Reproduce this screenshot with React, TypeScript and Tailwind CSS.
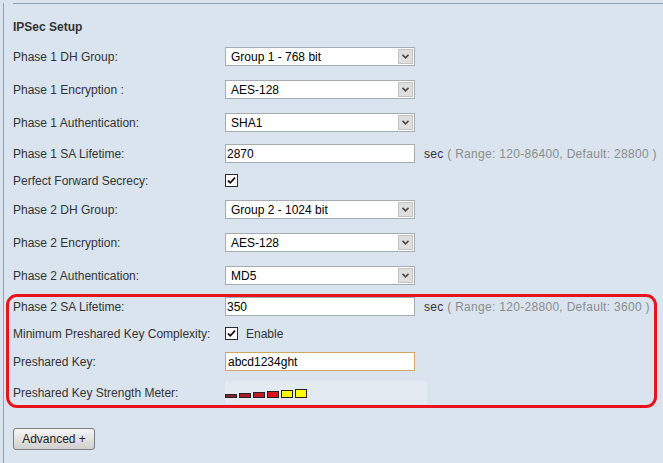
import type { ReactNode } from 'react';

const FONT = "font-['Liberation_Sans',Arial,sans-serif]";

function Select({ value }: { value: string }) {
  return (
    <div className="flex h-[19px] w-[190px] border border-[#a5acb2] bg-white">
      <div className="flex flex-1 items-center pl-[5px] text-[12px] text-black">{value}</div>
      <div className="m-[1px] flex w-[15px] items-center justify-center border border-[#c3c3c3] bg-[#dedede]">
        <svg width="7" height="5" viewBox="0 0 7 5">
          <path d="M0.5 0.8 L3.5 3.8 L6.5 0.8" fill="none" stroke="#4a4a4a" strokeWidth="1.6" />
        </svg>
      </div>
    </div>
  );
}

function TextBox({ value, focus = false }: { value: string; focus?: boolean }) {
  return (
    <div
      className={
        focus
          ? 'flex h-[19px] w-[190px] items-center border border-[#d3a762] bg-white pl-[2px] text-[12px] text-black'
          : 'flex h-[19px] w-[190px] items-center border border-[#a5acb2] bg-white pl-[1px] text-[12px] text-black'
      }
    >
      {value}
    </div>
  );
}

function Check() {
  return (
    <div className="flex h-[13px] w-[13px] items-center justify-center border border-[#2b2b2b] bg-white">
      <svg width="9" height="9" viewBox="0 0 9 9">
        <path d="M1 4.5 L3.3 6.8 L8 1.6" fill="none" stroke="#111" strokeWidth="1.8" />
      </svg>
    </div>
  );
}

function Row({ label, children, className }: { label: string; children: ReactNode; className: string }) {
  return (
    <div className={`flex items-center ${className}`}>
      <div className="w-[212px] shrink-0 text-[12px] text-[#333]">{label}</div>
      {children}
    </div>
  );
}

function Range({ text }: { text: string }) {
  return (
    <span className="ml-[9px] text-[12px] tracking-[0.3px] text-[#333]">
      sec <span className="text-[#8c8c8c]">{text}</span>
    </span>
  );
}

const bars = [
  { h: 'h-[4px]', c: 'bg-[#8d2030]' },
  { h: 'h-[5px]', c: 'bg-[#ad1c2c]' },
  { h: 'h-[6px]', c: 'bg-[#c31a29]' },
  { h: 'h-[7px]', c: 'bg-[#de101b]' },
  { h: 'h-[8px]', c: 'bg-[#ffff00]' },
  { h: 'h-[9px]', c: 'bg-[#ffff00]' },
];

export default function App() {
  return (
    <div className={`h-[463px] w-[663px] overflow-hidden bg-[#d9e4ee] pl-[3px] ${FONT}`}>
      <div className="h-[462px] border-b border-l border-[#8fa3b6]">
        <div className="ml-[9px] mt-[3px] border-t border-[#8fa3b6]" />
        <div className="pl-[9px]">
          <div className="mt-[16px] h-[14px] text-[12px] font-bold leading-[14px] text-[#333]">IPSec Setup</div>

          <Row label="Phase 1 DH Group:" className="mt-[13px]">
            <Select value="Group 1 - 768 bit" />
          </Row>
          <Row label="Phase 1 Encryption :" className="mt-[14px]">
            <Select value="AES-128" />
          </Row>
          <Row label="Phase 1 Authentication:" className="mt-[14px]">
            <Select value="SHA1" />
          </Row>
          <Row label="Phase 1 SA Lifetime:" className="mt-[12px]">
            <TextBox value="2870" />
            <Range text="( Range: 120-86400, Default: 28800 )" />
          </Row>
          <Row label="Perfect Forward Secrecy:" className="mt-[11px] h-[13px]">
            <Check />
          </Row>
          <Row label="Phase 2 DH Group:" className="mt-[13px]">
            <Select value="Group 2 - 1024 bit" />
          </Row>
          <Row label="Phase 2 Encryption:" className="mt-[14px]">
            <Select value="AES-128" />
          </Row>
          <Row label="Phase 2 Authentication:" className="mt-[14px]">
            <Select value="MD5" />
          </Row>

          <div className="-ml-[7px] mt-[9px] w-[651px] rounded-[11px] border-[3px] border-[#e8141c] pb-[1px] pl-[4px]">
            <Row label="Phase 2 SA Lifetime:" className="">
              <TextBox value="350" />
              <Range text="( Range: 120-28800, Default: 3600 )" />
            </Row>
            <Row label="Minimum Preshared Key Complexity:" className="mt-[11px] h-[13px]">
              <Check />
              <span className="ml-[8px] text-[12px] text-[#333]">Enable</span>
            </Row>
            <Row label="Preshared Key:" className="mt-[12px]">
              <TextBox value="abcd1234ght" focus />
            </Row>
            <Row label="Preshared Key Strength Meter:" className="mt-[10px]">
              <div className="flex h-[23px] w-[202px] items-end gap-[2px] bg-[#e3eaf2] pb-[6px]">
                {bars.map((b, i) => (
                  <div key={i} className={`w-[12px] border border-[#222] ${b.h} ${b.c}`} />
                ))}
              </div>
            </Row>
          </div>

          <button className="mt-[20px] flex h-[22px] w-[82px] items-center justify-center rounded-[3px] border border-[#7d7d7d] bg-gradient-to-b from-[#f6f6f6] to-[#cfcfcf] text-[12px] text-[#222]">
            Advanced +
          </button>
        </div>
      </div>
    </div>
  );
}
